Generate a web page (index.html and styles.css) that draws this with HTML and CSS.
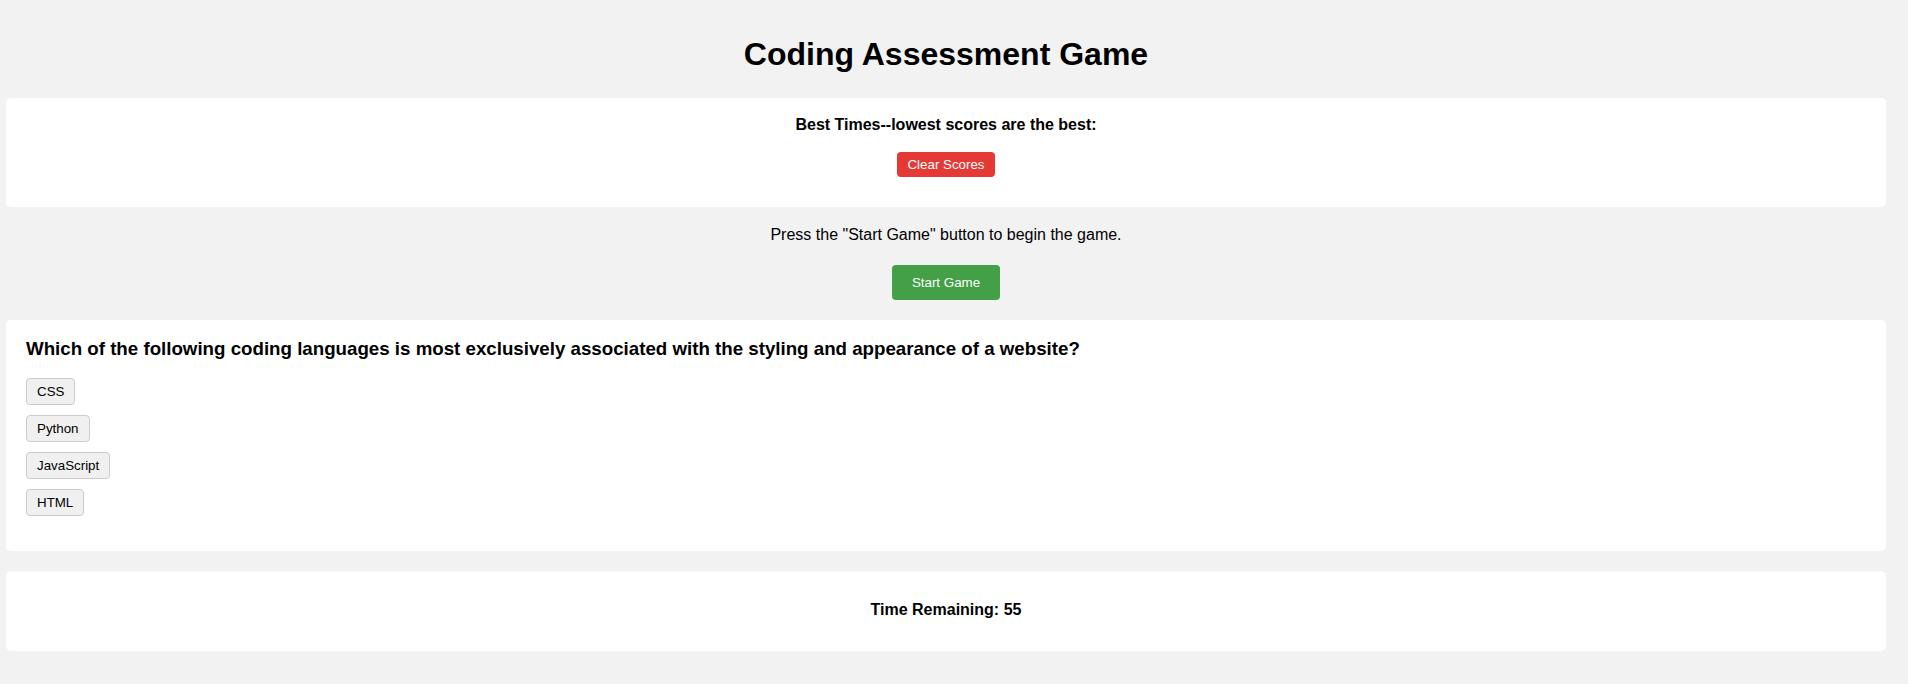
FILE: index.html
```html
<!DOCTYPE html>
<html lang="en">
<head>
<meta charset="utf-8">
<title>Coding Assessment Game</title>
<link rel="stylesheet" href="styles.css">
</head>
<body>
<div class="page">
  <header class="header">
    <h1 class="title">Coding Assessment Game</h1>
  </header>

  <section class="card scores">
    <p class="scores-title">Best Times--lowest scores are the best:</p>
    <button class="btn btn-red">Clear Scores</button>
  </section>

  <section class="start">
    <p class="start-text">Press the "Start Game" button to begin the game.</p>
    <button class="btn btn-green">Start Game</button>
  </section>

  <section class="card question">
    <h3 class="question-text">Which of the following coding languages is most exclusively associated with the styling and appearance of a website?</h3>
    <div class="answers">
      <button class="answer">CSS</button>
      <button class="answer">Python</button>
      <button class="answer">JavaScript</button>
      <button class="answer">HTML</button>
    </div>
  </section>

  <section class="card timer">
    <p class="timer-text">Time Remaining: 55</p>
  </section>
</div>
</body>
</html>
```

FILE: styles.css
```css
* {
  box-sizing: border-box;
}

html, body {
  margin: 0;
  padding: 0;
  background: #f2f2f2;
}

body {
  font-family: "Liberation Sans", Arial, Helvetica, sans-serif;
  color: #000;
}

.page {
  padding: 0 22px 30px 6px;
  display: flex;
  flex-direction: column;
}

.header {
  display: flex;
  justify-content: center;
  padding: 36px 0 25px;
}

.title {
  margin: 0;
  font-size: 32px;
  font-weight: bold;
  line-height: 37px;
}

.card {
  background: #fff;
  border-radius: 5px;
}

.scores {
  display: flex;
  flex-direction: column;
  align-items: center;
  padding: 18px 20px 30px;
}

.scores-title {
  margin: 0 0 18px;
  font-size: 16px;
  font-weight: bold;
  line-height: 18px;
}

.btn {
  font-family: "Liberation Sans", Arial, Helvetica, sans-serif;
  font-size: 13.333px;
  line-height: 15px;
  color: #fff;
  border: none;
  border-radius: 4px;
  cursor: pointer;
}

.btn-red {
  background: #e53935;
  padding: 5px 10px;
}

.btn-green {
  background: #43a047;
  padding: 10px 20px;
}

.start {
  display: flex;
  flex-direction: column;
  align-items: center;
  padding: 19px 0 20px;
}

.start-text {
  margin: 0 0 21px;
  font-size: 16px;
  line-height: 18px;
}

.question {
  padding: 18px 20px 35px;
}

.question-text {
  margin: 0 0 18px;
  font-size: 18.72px;
  font-weight: bold;
  line-height: 22px;
}

.answers {
  display: flex;
  flex-direction: column;
  align-items: flex-start;
  gap: 10px;
}

.answer {
  font-family: "Liberation Sans", Arial, Helvetica, sans-serif;
  font-size: 13.333px;
  line-height: 15px;
  color: #000;
  background: #f0f0f0;
  border: 1px solid #cccccc;
  border-radius: 4px;
  padding: 5px 10px;
  cursor: pointer;
}

.timer {
  margin-top: 20px;
  display: flex;
  justify-content: center;
  padding: 30px 20px 32px;
}

.timer-text {
  margin: 0;
  font-size: 16px;
  font-weight: bold;
  line-height: 18px;
}
```
